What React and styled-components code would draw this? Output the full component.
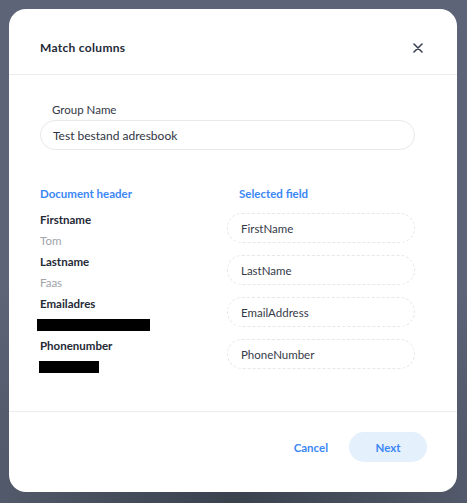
import React from 'react';
import styled, { createGlobalStyle } from 'styled-components';

const blue = '#3b87f5';
const dark = '#242936';
const line = '#ececee';

const Global = createGlobalStyle`
  html, body {
    margin: 0;
    height: 100%;
  }
  body {
    background: radial-gradient(ellipse 70% 60% at 50% 100%, #39424d 0%, #4a5261 50%, #5d6478 100%);
    background-color: #5d6478;
    font-family: 'Lato', 'Open Sans', sans-serif;
    overflow: hidden;
  }
`;

const Page = styled.div`
  padding: 9px;
`;

const Modal = styled.div`
  width: 448px;
  height: 483px;
  background: #fff;
  border-radius: 17px;
  display: flex;
  flex-direction: column;
  overflow: hidden;
`;

const Header = styled.div`
  height: 66px;
  flex-shrink: 0;
  display: flex;
  align-items: center;
  justify-content: space-between;
  padding: 12px 34px 0 31px;
  border-bottom: 1px solid ${line};
  box-sizing: border-box;
`;

const Title = styled.h1`
  margin: 0;
  font-size: 12px;
  font-weight: 700;
  color: ${dark};
  letter-spacing: 0.3px;
`;

const CloseButton = styled.button`
  border: 0;
  background: none;
  padding: 0;
  width: 10px;
  height: 10px;
  display: flex;
  cursor: pointer;
`;

const Body = styled.div`
  flex: 1;
  padding: 27px 42px 0 31px;
`;

const Label = styled.div`
  font-size: 11.5px;
  line-height: 16px;
  color: #343846;
  padding-left: 12px;
  margin-bottom: 2px;
`;

const Input = styled.div`
  height: 30px;
  box-sizing: border-box;
  border: 1px solid #e7e8eb;
  border-radius: 15px;
  padding: 0 12px;
  display: flex;
  align-items: center;
  font-size: 12px;
  color: #2f3442;
`;

const Grid = styled.div`
  display: grid;
  grid-template-columns: 187px 188px;
  margin-top: 36px;
`;

const ColHead = styled.div`
  font-size: 11.5px;
  line-height: 16px;
  font-weight: 700;
  color: ${blue};
  padding-left: ${({ indent }) => indent || 0}px;
  margin-bottom: 7px;
`;

const Cell = styled.div`
  height: 42px;
`;

const FieldName = styled.div`
  font-size: 11.5px;
  line-height: 21px;
  font-weight: 700;
  color: ${dark};
`;

const FieldValue = styled.div`
  font-size: 11.5px;
  line-height: 21px;
  color: #a0a3aa;
`;

const Redacted = styled.div`
  height: 12px;
  width: ${({ w }) => w}px;
  margin: 5px 0 0 ${({ shift }) => shift}px;
  background: #000;
`;

const Select = styled.div`
  margin-top: 4px;
  height: 30px;
  box-sizing: border-box;
  border: 1px dashed #e6e7ea;
  border-radius: 15px;
  padding: 0 13px;
  display: flex;
  align-items: center;
  font-size: 11.5px;
  color: #353a48;
`;

const Footer = styled.div`
  height: 81px;
  flex-shrink: 0;
  border-top: 1px solid ${line};
  display: flex;
  align-items: center;
  justify-content: flex-end;
  gap: 21px;
  padding: 0 30px 10px 0;
  box-sizing: border-box;
`;

const TextButton = styled.button`
  border: 0;
  background: none;
  font-family: inherit;
  font-size: 11.5px;
  font-weight: 700;
  color: ${blue};
  padding: 0;
  cursor: pointer;
`;

const PillButton = styled(TextButton)`
  width: 78px;
  height: 30px;
  border-radius: 15px;
  background: #e5f0fd;
`;

const rows = [
  { name: 'Firstname', value: 'Tom', field: 'FirstName' },
  { name: 'Lastname', value: 'Faas', field: 'LastName' },
  { name: 'Emailadres', redact: 113, shift: -3, field: 'EmailAddress' },
  { name: 'Phonenumber', redact: 60, shift: -1, field: 'PhoneNumber' },
];

const CloseIcon = () => (
  <svg width="10" height="10" viewBox="0 0 10 10">
    <path d="M1 1 L9 9 M9 1 L1 9" stroke="#3b4254" strokeWidth="1.6" strokeLinecap="round" />
  </svg>
);

const App = () => (
  <>
    <Global />
    <Page>
      <Modal>
        <Header>
          <Title>Match columns</Title>
          <CloseButton aria-label="Close"><CloseIcon /></CloseButton>
        </Header>
        <Body>
          <Label>Group Name</Label>
          <Input>Test bestand adresbook</Input>
          <Grid>
            <ColHead>Document header</ColHead>
            <ColHead indent={12}>Selected field</ColHead>
            {rows.map((r) => (
              <React.Fragment key={r.name}>
                <Cell>
                  <FieldName>{r.name}</FieldName>
                  {r.redact
                    ? <Redacted w={r.redact} shift={r.shift} />
                    : <FieldValue>{r.value}</FieldValue>}
                </Cell>
                <Cell>
                  <Select>{r.field}</Select>
                </Cell>
              </React.Fragment>
            ))}
          </Grid>
        </Body>
        <Footer>
          <TextButton>Cancel</TextButton>
          <PillButton>Next</PillButton>
        </Footer>
      </Modal>
    </Page>
  </>
);

export default App;
